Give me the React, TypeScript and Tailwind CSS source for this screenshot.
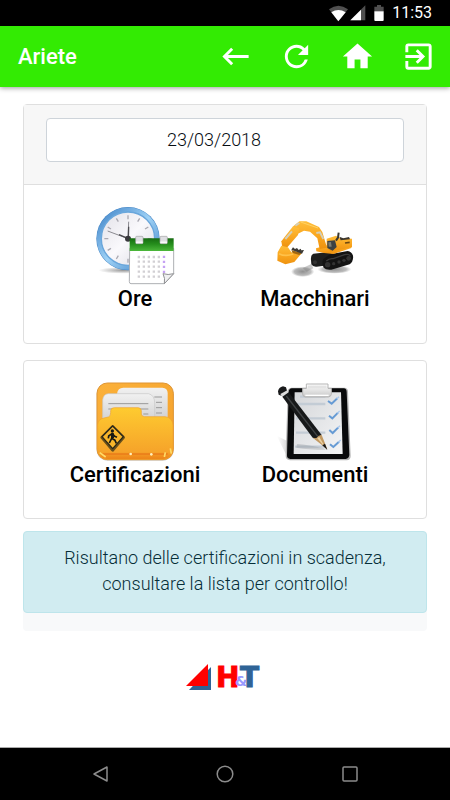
import type { ReactNode } from "react";
import {
  MdExitToApp,
  MdHome,
  MdKeyboardBackspace,
  MdRefresh,
} from "react-icons/md";

const actions = [
  { label: "Indietro", icon: MdKeyboardBackspace },
  { label: "Aggiorna", icon: MdRefresh },
  { label: "Home", icon: MdHome },
  { label: "Esci", icon: MdExitToApp },
];

function StatusBar() {
  return (
    <div className="flex h-[26px] items-center justify-end bg-black pr-[18px] text-white">
      <svg viewBox="0 0 57 51" className="h-[17px] w-[19px]">
        <path d="M0 13Q28-8 57 13L28 49Z" fill="#505050" />
        <path d="M7 22Q28 8 50 22L28 49Z" fill="#fff" />
      </svg>
      <svg viewBox="0 0 48 48" className="ml-[2px] size-4">
        <path d="M46 1V46H1Z" fill="#505050" />
        <path d="M33 14V46H1Z" fill="#fff" />
      </svg>
      <svg viewBox="0 0 30 48" className="ml-2 h-4 w-[10px]">
        <path d="M9 0H21V5H29V19H1V5H9Z" fill="#505050" />
        <path d="M1 19H29V45Q29 48 26 48H4Q1 48 1 45Z" fill="#fff" />
      </svg>
      <span className="ml-2 text-[16px] leading-7 font-normal">11:53</span>
    </div>
  );
}

function ClockIcon() {
  return (
    <svg viewBox="30 30 240 240" className="size-20" aria-hidden="true">
      <defs>
        <linearGradient id="clockRim" x1="0" y1="0" x2="1" y2="1">
          <stop offset="0" stopColor="#3f83c8" />
          <stop offset=".5" stopColor="#9fd2f6" />
          <stop offset="1" stopColor="#3c80c4" />
        </linearGradient>
        <linearGradient id="clockFace" x1="0" y1="0" x2="1" y2="1">
          <stop offset="0" stopColor="#e2e1e8" />
          <stop offset=".5" stopColor="#faf9fc" />
          <stop offset="1" stopColor="#d9d9e1" />
        </linearGradient>
        <linearGradient id="calendarTop" x1="0" y1="0" x2="0" y2="1">
          <stop offset="0" stopColor="#176c12" />
          <stop offset=".45" stopColor="#258d1c" />
          <stop offset="1" stopColor="#4cb83b" />
        </linearGradient>
        <radialGradient id="clockShadow">
          <stop offset="0" stopColor="#777" stopOpacity=".75" />
          <stop offset="1" stopColor="#777" stopOpacity="0" />
        </radialGradient>
      </defs>
      <ellipse cx="115" cy="226" rx="75" ry="10" fill="url(#clockShadow)" />
      <circle cx="129" cy="131" r="95" fill="#4585c4" />
      <circle cx="129" cy="131" r="87" fill="none" stroke="url(#clockRim)" strokeWidth="13" />
      <circle cx="129" cy="131" r="80" fill="url(#clockFace)" stroke="#6aa7dc" strokeWidth="4" />
      <g stroke="#aaa9b2" strokeWidth="4">
        <path d="M129 61V73M129 191V203M58 131H70M188 131H200" />
        <path d="M94 70L100 80M164 70L158 80M68 96L78 102M190 96L180 102M68 166L78 160M94 192L100 182" />
      </g>
      <path d="M129 131L68 108M129 131L131 80" stroke="#8c8b91" strokeWidth="3" />
      <path d="M130 131L102 119M130 131L131 95" stroke="#4c4b50" strokeWidth="4" />
      <circle cx="129" cy="131" r="9" fill="#39383d" />
      <path d="M134 160H266V236L238 266H138Q133 266 133 260Z" fill="#fff" stroke="#aeb0b4" strokeWidth="3" />
      <path d="M134 130H266V168H134Z" fill="url(#calendarTop)" />
      <g stroke="#a1a1a5" strokeWidth="2">
        <rect x="152" y="124" width="22" height="22" rx="3" fill="#dedee2" />
        <rect x="225" y="124" width="22" height="22" rx="3" fill="#dedee2" />
        <path d="M153 142H173M226 142H246" stroke="#f9f9f9" strokeWidth="5" />
      </g>
      <g stroke="#d2d0d4" strokeWidth="7" strokeDasharray="7 8">
        <path d="M158 186H228M158 200H228M158 215H228M158 230H228M158 245H228" />
      </g>
      <path d="M237 182V234" stroke="#c5a1f3" strokeWidth="7" strokeDasharray="7 8" />
      <path d="M238 266Q241 250 234 236Q249 241 266 236Z" fill="#f0f0f1" stroke="#8e8f92" strokeWidth="3" />
    </svg>
  );
}

function ExcavatorIcon() {
  return (
    <svg viewBox="45 30 240 240" className="size-20" aria-hidden="true">
      <defs>
        <linearGradient id="diggerArm" x1="0" y1="0" x2="0" y2="1">
          <stop offset="0" stopColor="#ffbe3a" />
          <stop offset=".55" stopColor="#f9a51e" />
          <stop offset="1" stopColor="#ee920f" />
        </linearGradient>
        <radialGradient id="diggerShadow">
          <stop offset="0" stopColor="#555" stopOpacity=".65" />
          <stop offset=".7" stopColor="#777" stopOpacity=".5" />
          <stop offset="1" stopColor="#888" stopOpacity="0" />
        </radialGradient>
      </defs>
      <ellipse cx="128" cy="230" rx="35" ry="16" fill="url(#diggerShadow)" />
      <path d="M128 219L154 207L160 220L140 230Z" fill="#777" opacity=".4" />
      <ellipse cx="223" cy="223" rx="51" ry="13" fill="url(#diggerShadow)" />
      <path d="M160 176Q151 181 153 196L154 208Q158 216 170 215L192 212L240 180L200 172Z" fill="#1d1e1e" />
      <path d="M190 192Q184 205 191 218Q198 226 214 224L269 208Q281 199 279 182Q275 170 263 168L210 178Z" fill="#131313" />
      <path d="M199 198Q208 189 220 191L254 179Q266 176 271 182" fill="none" stroke="#3c3c3c" strokeWidth="4" />
      <g fill="#333">
        <circle cx="203" cy="209" r="8" />
        <circle cx="221" cy="206" r="5" />
        <circle cx="237" cy="201" r="5" />
        <circle cx="252" cy="196" r="5" />
        <circle cx="266" cy="190" r="7" />
        <circle cx="165" cy="202" r="6" />
      </g>
      <path d="M168 160L201 151L238 151L276 143L274 159L220 177L192 174L169 169Z" fill="url(#diggerArm)" />
      <path d="M200 131L228 122L240 130L276 131V156L237 165L212 170L200 157Z" fill="url(#diggerArm)" />
      <path d="M202 138L225 136L230 156L218 167L202 159Z" fill="#3b4143" />
      <path d="M205 142L213 141L215 155L206 155Z" fill="#7a7d74" />
      <path d="M228 137L234 128L236 113" fill="none" stroke="#39372f" strokeWidth="6" />
      <path d="M238 125L250 130L267 126L270 133L242 136Z" fill="#3c372f" />
      <path d="M255 144L269 142" stroke="#6e4810" strokeWidth="5" />
      <path d="M98 95L118 79L139 79L177 96L187 111L201 158L179 162L172 130L150 110L132 107L112 117Z" fill="url(#diggerArm)" />
      <path d="M98 95L118 100L114 120L82 157L67 157L64 139Z" fill="url(#diggerArm)" />
      <path d="M106 92L118 84M76 132L96 109M169 114L180 112L190 132" fill="none" stroke="#d4cfb9" strokeWidth="6" />
      <path d="M122 81L174 99" fill="none" stroke="#ffd365" strokeWidth="3" />
      <path d="M64 152L84 157L94 172L124 176L103 201L76 208L52 197L53 172Z" fill="url(#diggerArm)" />
      <path d="M94 165L126 174L118 180L98 174Z" fill="#a3670f" />
      <path d="M94 164L99 157L105 162L111 159L116 165L122 161L124 166L132 165L126 176Z" fill="#3c3a35" />
      <path d="M57 176Q76 186 100 177" fill="none" stroke="#ffc149" strokeWidth="5" />
    </svg>
  );
}

function FolderIcon() {
  return (
    <svg viewBox="105 18 240 240" className="size-20" aria-hidden="true">
      <defs>
        <linearGradient id="folderBack" x1="0" y1="0" x2="1" y2="1">
          <stop offset="0" stopColor="#fbb13a" />
          <stop offset="1" stopColor="#f4a02b" />
        </linearGradient>
        <linearGradient id="folderFront" x1="0" y1="0" x2="0" y2="1">
          <stop offset="0" stopColor="#fecb30" />
          <stop offset=".85" stopColor="#f6a42a" />
          <stop offset="1" stopColor="#ed8217" />
        </linearGradient>
        <linearGradient id="paper" x1="0" y1="0" x2="0" y2="1">
          <stop offset="0" stopColor="#f1f1f1" />
          <stop offset="1" stopColor="#cecece" />
        </linearGradient>
      </defs>
      <rect x="110" y="26" width="231" height="231" rx="32" fill="#cfcfcf" />
      <rect x="111" y="24" width="229" height="230" rx="31" fill="url(#folderBack)" stroke="#df9534" strokeWidth="3" />
      <path d="M171 57Q173 38 190 38H307Q323 39 323 55V140H171Z" fill="url(#paper)" />
      <path d="M283 66H306M288 82H306M288 98H306M288 114H306" stroke="#999" strokeWidth="3" />
      <path d="M128 75Q130 57 145 56H266Q284 61 284 84V145H128Z" fill="url(#paper)" stroke="#c7c7c7" strokeWidth="2" />
      <path d="M145 86H265M145 102H265M250 117H265" stroke="#999" strokeWidth="3" />
      <path d="M113 150Q114 132 132 129L145 126Q152 124 152 113V107Q153 98 163 98H235Q244 99 244 108V117Q245 125 254 125H315Q337 127 339 150V222Q337 252 309 253H143Q115 252 113 224Z" fill="url(#folderFront)" stroke="#f0a12c" strokeWidth="2" />
      <path d="M128 237H323" stroke="#e56d14" strokeWidth="3" />
      <path d="M119 233L137 246M331 220L334 236M316 232L313 246" stroke="#ffdc69" strokeWidth="5" />
      <circle cx="212" cy="237" r="4" fill="#fff0bc" />
      <circle cx="274" cy="238" r="4" fill="#fff0bc" />
      <path d="M158 154L191 187L158 226L125 187Z" fill="#69501c" stroke="#69501c" strokeWidth="8" strokeLinejoin="round" />
      <path d="M158 153L190 185L158 221L126 185Z" fill="#f8b52b" stroke="#292719" strokeWidth="4" strokeLinejoin="round" />
      <circle cx="157" cy="168" r="5" fill="#171914" />
      <path d="M158 174L155 190L148 204M155 190L165 196L169 205M156 176L146 183L145 190M158 177L164 184L171 187" fill="none" stroke="#171914" strokeWidth="5" strokeLinejoin="round" />
      <path d="M154 174H161L162 189H153Z" fill="#171914" />
    </svg>
  );
}

function ClipboardIcon() {
  return (
    <svg viewBox="60 18 240 240" className="size-20" aria-hidden="true">
      <defs>
        <linearGradient id="sheet" x1="0" y1="0" x2="1" y2="1">
          <stop offset="0" stopColor="#d4d6d9" />
          <stop offset="1" stopColor="#f4f5f6" />
        </linearGradient>
        <linearGradient id="clip" x1="0" y1="0" x2="0" y2="1">
          <stop offset="0" stopColor="#fff" />
          <stop offset="1" stopColor="#c7c7c7" />
        </linearGradient>
        <linearGradient id="clipShadow" x1="0" y1="0" x2="1" y2="0">
          <stop offset="0" stopColor="#aaa" stopOpacity="0" />
          <stop offset="1" stopColor="#777" stopOpacity=".4" />
        </linearGradient>
      </defs>
      <path d="M65 182L104 202V247L94 240Z" fill="url(#clipShadow)" />
      <path d="M109 38H270Q279 39 279 50L287 243Q287 255 275 256H105Q92 254 92 243L98 50Q98 39 109 38Z" fill="#b4b4b4" />
      <path d="M111 40H266Q275 41 275 51L283 240Q282 251 272 252H106Q95 250 96 240L101 50Q102 41 111 40Z" fill="#090a0b" />
      <path d="M119 52H258L263 237H116Z" fill="url(#sheet)" />
      <path d="M135 65H211M125 87H211M123 130H211M123 173H211M120 215H211" stroke="#c3ccd5" strokeWidth="7" />
      <g fill="none" stroke="#669bd4" strokeWidth="6">
        <path d="M219 78L230 86L247 70" />
        <path d="M222 122L232 130L249 113" />
        <path d="M223 165L233 174L250 157" />
        <path d="M225 208L235 216L252 200" />
      </g>
      <path d="M245 72L252 65M247 115L254 108M248 159L255 152M250 202L257 195" stroke="#aac9ed" strokeWidth="4" />
      <path d="M154 27H219V40H229V58Q228 65 220 66H151Q143 65 143 57V40H154Z" fill="url(#clip)" stroke="#b5b5b5" strokeWidth="3" />
      <path d="M159 32H214V40H159Z" fill="#e3e3e3" />
      <path d="M151 61H221" stroke="#fff" strokeWidth="4" />
      <path d="M126 207Q160 209 206 220L213 224Q160 224 124 218Z" fill="#8d9199" opacity=".35" />
      <path d="M69 49Q71 37 84 34L93 37L96 47L79 62L71 59Z" fill="#191a1b" />
      <path d="M76 57L97 46L101 52L82 65Z" fill="#ddd" />
      <path d="M82 65L101 52L200 180L181 191L173 188Z" fill="#17191a" />
      <path d="M94 63L188 184" stroke="#3f4244" strokeWidth="4" />
      <path d="M173 188L184 190L191 182L200 180L217 223Z" fill="#c29961" />
      <path d="M187 190L193 186L214 222Z" fill="#ead0a2" />
      <path d="M217 225L202 211L210 206Z" fill="#171717" />
    </svg>
  );
}

function Tile({ label, children }: { label: string; children: ReactNode }) {
  return (
    <a
      href="#"
      className="flex flex-col items-center text-[22px] leading-7 font-medium text-black"
    >
      {children}
      {label}
    </a>
  );
}

function Logo() {
  return (
    <svg
      viewBox="0 -8 80 44"
      className="h-11 w-20"
      role="img"
      aria-label="H&T"
    >
      <path d="M26 4V27H4Z" fill="#2f6396" />
      <path d="M23 1V23H1Z" fill="#f00" />
      <g fontFamily="DejaVu Sans, sans-serif" fontWeight="bold">
        <text x="31" y="24" fontSize="28" fill="#f00" stroke="#f00">
          H
        </text>
        <text x="55" y="24" fontSize="28" fill="#2f6396" stroke="#2f6396">
          T
        </text>
        <text x="50" y="23" fontSize="14" fill="#9999ff">
          &amp;
        </text>
      </g>
    </svg>
  );
}

export default function App() {
  return (
    <div className="flex min-h-screen flex-col bg-white font-['Roboto',sans-serif]">
      <StatusBar />
      <header className="flex h-[61px] items-center justify-between bg-[#33eb03] pr-[14px] pl-[18px] text-white shadow-[0_1px_5px_rgba(0,0,0,0.4)]">
        <h1 className="text-[22px] leading-7 font-medium">Ariete</h1>
        <nav className="flex gap-[26px]">
          {actions.map(({ label, icon: Icon }) => (
            <button key={label} type="button" aria-label={label}>
              <Icon className="size-[35px]" />
            </button>
          ))}
        </nav>
      </header>

      <main className="flex flex-1 flex-col px-[23px] pt-[17px]">
        <section className="rounded-[4px] border border-[#dfdfdf]">
          <div className="border-b border-[#dfdfdf] bg-[#f7f7f7] px-[22px] pt-[13px] pb-[22px]">
            <input
              type="text"
              aria-label="Data"
              defaultValue="23/03/2018"
              className="block h-11 w-full rounded-[4px] border border-[#ced4da] bg-white pr-[22px] pb-[2px] text-center text-[18px] font-light text-[#060c12]"
            />
          </div>
          <div className="grid h-[158px] grid-cols-2 px-[21px] pt-5">
            <Tile label="Ore">
              <ClockIcon />
            </Tile>
            <Tile label="Macchinari">
              <ExcavatorIcon />
            </Tile>
          </div>
        </section>

        <section className="mt-4 grid h-[159px] grid-cols-2 rounded-[4px] border border-[#dfdfdf] px-[21px] pt-5">
          <Tile label="Certificazioni">
            <FolderIcon />
          </Tile>
          <Tile label="Documenti">
            <ClipboardIcon />
          </Tile>
        </section>

        <div className="mt-3 rounded-[4px] bg-[#f8f9fa] pb-[18px]">
          <div
            role="alert"
            className="rounded-[4px] border border-[#bee5eb] bg-[#d1ecf1] px-8 pt-[13px] pb-[15px] text-center text-[18px] leading-[26px] font-light text-[#062e38]"
          >
            Risultano delle certificazioni in scadenza, consultare la lista per
            controllo!
          </div>
        </div>

        <footer className="flex justify-center py-6">
          <Logo />
        </footer>
      </main>

      <nav className="grid h-[53px] grid-cols-[1fr_23px_1fr] items-center border-t border-[#aaa] bg-black px-[90px]">
        <button type="button" aria-label="Indietro">
          <svg viewBox="0 0 20 20" className="size-5">
            <path d="M17 3V17L4 10Z" fill="none" stroke="#8c8c8c" strokeWidth="1.5" strokeLinejoin="round" />
          </svg>
        </button>
        <button type="button" aria-label="Home" className="flex justify-center">
          <svg viewBox="0 0 20 20" className="size-5">
            <circle cx="10" cy="10" r="7.8" fill="none" stroke="#8c8c8c" strokeWidth="1.5" />
          </svg>
        </button>
        <button type="button" aria-label="Recenti" className="flex justify-end">
          <svg viewBox="0 0 20 20" className="size-5">
            <rect x="3" y="3" width="14" height="14" rx="1" fill="none" stroke="#8c8c8c" strokeWidth="1.5" />
          </svg>
        </button>
      </nav>
    </div>
  );
}
